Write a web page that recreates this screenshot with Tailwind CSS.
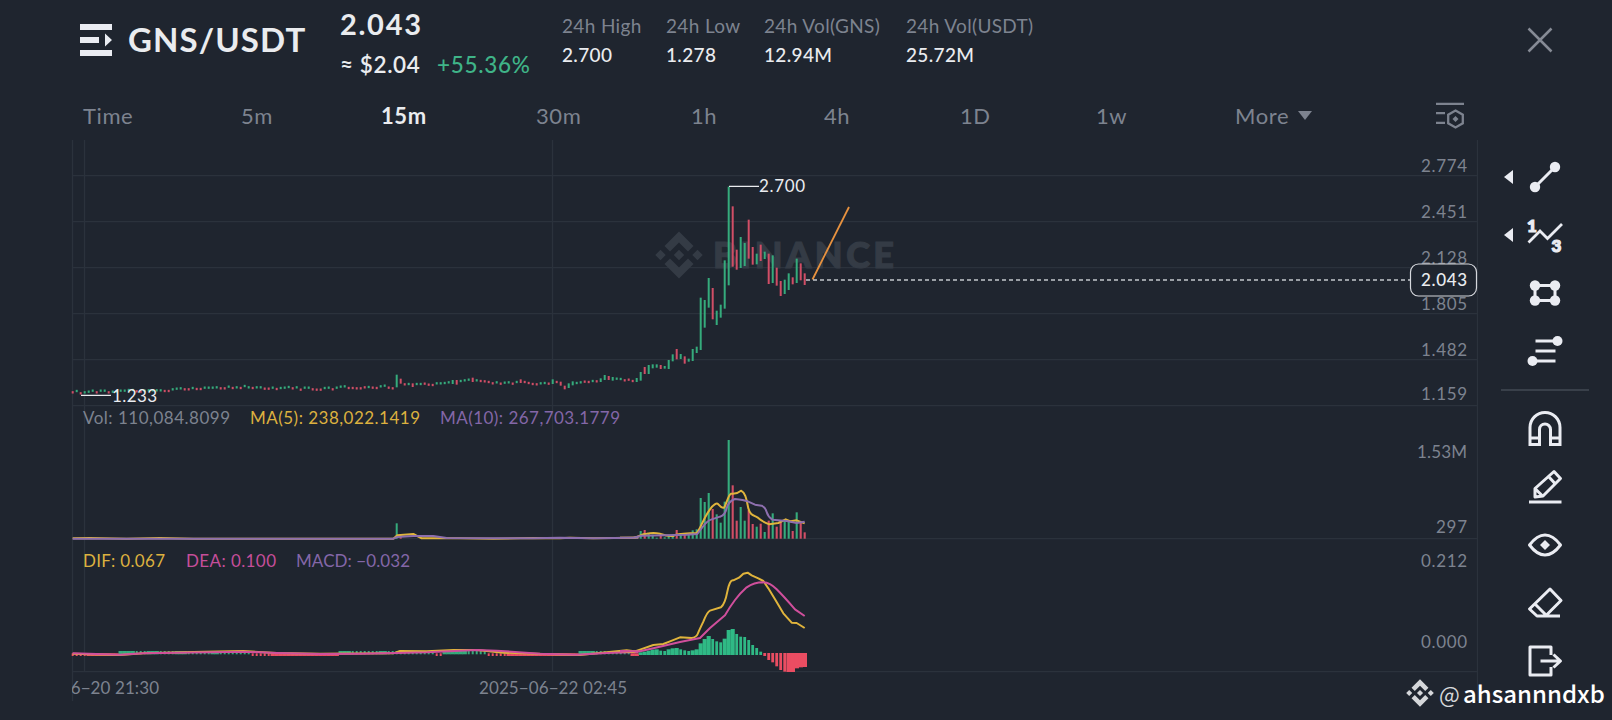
<!DOCTYPE html>
<html lang="en">
<head>
  <meta charset="UTF-8" />
  <meta name="viewport" content="width=device-width, initial-scale=1" />
  <title>GNS/USDT</title>
  <script src="https://cdn.jsdelivr.net/npm/@tailwindcss/browser@4"></script>
</head>
<body class="w-[1612px] h-[720px] overflow-hidden bg-[#1f252f] text-[#eaecef] font-[Lato,sans-serif] flex relative">

  <main class="w-[1478px] flex flex-col">
    <!-- Header -->
    <header class="h-[94px] pl-20 flex whitespace-nowrap">
      <svg class="w-8 h-8 mt-6" viewBox="0 0 32 32" fill="#eaecf2">
        <path d="M0 0h32v6H0zM0 13h19v6H0zM0 26h32v6H0zM25 9.500l7 6.500-7 6.500z" />
      </svg>
      <h1 class="ml-[16px] mt-[19px] w-[212px] text-[33px] leading-10 font-bold tracking-[1.1px]">GNS/USDT</h1>
      <div class="w-[222px]">
        <div class="mt-[8px] text-[29px] leading-8 font-bold tracking-[1.7px]">2.043</div>
        <div class="mt-[9px] flex text-[22.5px] leading-8">
          <span class="w-[97px] font-semibold tracking-[0.6px]">≈ $2.04</span>
          <span class="text-[#3fb488] font-medium tracking-[0.7px]">+55.36%</span>
        </div>
      </div>
      <dl class="flex pt-[12px] text-[19px] leading-7 tracking-[0.35px]">
        <div class="w-[104px]"><dt class="text-[#7d838f]">24h High</dt><dd class="mt-px font-medium">2.700</dd></div>
        <div class="w-[98px]"><dt class="text-[#7d838f]">24h Low</dt><dd class="mt-px font-medium">1.278</dd></div>
        <div class="w-[142px]"><dt class="text-[#7d838f]">24h Vol(GNS)</dt><dd class="mt-px font-medium">12.94M</dd></div>
        <div><dt class="text-[#7d838f]">24h Vol(USDT)</dt><dd class="mt-px font-medium">25.72M</dd></div>
      </dl>
    </header>

    <!-- Intervals -->
    <nav class="h-[46px] pl-[83px] flex items-start text-[22px] leading-[44px] tracking-[0.6px] text-[#7d838f] whitespace-nowrap">
      <span class="w-[158px]">Time</span>
      <span class="w-[140px]">5m</span>
      <span class="w-[155px] text-[#eaecef] font-bold">15m</span>
      <span class="w-[155px]">30m</span>
      <span class="w-[133px]">1h</span>
      <span class="w-[136px]">4h</span>
      <span class="w-[136px]">1D</span>
      <span class="w-[139px]">1w</span>
      <span class="w-[201px] flex items-center gap-[9px]">More
        <svg class="w-[14px] h-[9px] -mt-[2px]" viewBox="0 0 14 9" fill="#7d838f"><path d="M0 0h14L7 9z" /></svg>
      </span>
      <svg class="w-7 h-[27px] mt-[8px]" viewBox="0 0 28 27" fill="none" stroke="#7d838f" stroke-width="2.300">
        <path d="M0 1.800h28M0 11.200h9M0 20.800h9" />
        <path d="M19.500 8.500l7.300 4.200v8.600l-7.300 4.200-7.300-4.200v-8.600z" />
        <path d="M19.500 14l3 3-3 3-3-3z" fill="#7d838f" stroke="none" />
      </svg>
    </nav>

    <!-- Chart, the viewBox starts below the intervals -->
    <svg class="w-[1478px] h-[580px]" viewBox="0 140 1478 580" font-family="Lato, sans-serif" font-size="17">
      <g stroke="#2b323c" stroke-width="1.300">
        <path d="M72 175.700H1477M72 221.700H1477M72 267.700H1477M72 313.700H1477M72 359.700H1477M72 405.700H1477M72 538.700H1477M72 671.700H1477" />
        <path d="M72.500 140V701M84.500 140V672M552.500 140V672M1477.500 140V701" />
      </g>

      <!-- Watermark -->
      <g fill="#343b45">
        <g transform="translate(679 255)">
          <path d="M0-23.500L14.500-9l-5.500 5.500L0-12.500l-9 9L-14.500-9zM0 23.500L14.500 9 9 3.500l-9 9-9-9L-14.500 9zM0-5.200L5.200 0 0 5.200-5.200 0zM-18.500-5.200L-13.300 0l-5.200 5.200L-23.700 0zM18.500-5.200L23.700 0l-5.200 5.200L13.300 0z" />
        </g>
        <text x="713" y="268" font-size="36" font-weight="900" textLength="181" stroke="#343b45" stroke-width="1.200">BINANCE</text>
      </g>

      <g id="candles"></g>
      <g id="volume"></g>
      <g id="macd"></g>

      <!-- Indicator lines -->
      <g fill="none" stroke-width="6" stroke-linejoin="round">
        <g transform="translate(60 360) scale(0.33333)">
          <path stroke="#e0b43c" d="M38 535L90 534 200 536 300 534 400 536 1000 536 1012 526 1060 522 1085 535 1130 535 1200 535 1300 536 1420 534 1500 535 1530 533 1600 535 1660 534 1735 533" />
          <path stroke="#8d6fae" d="M38 536H1000L1012 531 1060 528 1120 528 1160 534 1300 535 1420 535 1500 533 1600 535 1735 533" />
          <path stroke="#e0b43c" d="M38 881L180 885 250 880 400 876 550 873 650 879 780 881 1000 880 1020 873 1100 874 1180 870 1250 870 1330 878 1450 882 1560 885 1640 877 1700 871 1735 875" />
          <path stroke="#d04f9c" d="M38 880L180 884 250 880 450 877 550 875 650 879 780 882 900 881 1010 879 1100 877 1250 870 1310 872 1440 881 1550 884 1640 879 1735 876" />
        </g>
        <g transform="translate(620 400) scale(0.33333)">
          <path stroke="#e0b43c" d="M0 413H40C60 412 60 402 80 401 100 397 115 400 120 401S135 410 160 408C170 400 200 401 230 399 240 390 250 355 270 328 280 314 290 308 294 312S305 328 313 322C320 310 325 285 333 281 345 283 353 280 363 272 375 278 378 290 385 325 390 345 400 346 412 352 425 364 440 370 448 373L475 369 497 358 512 364 530 361 554 370" />
          <path stroke="#8d6fae" d="M0 413H40L65 407 200 404 232 402 250 378Q262 362 275 358L300 350Q315 346 320 325T345 297Q370 299 385 305L405 314 425 317Q436 322 440 336T457 359L500 363 530 369 554 365" />
          <path stroke="#e0b43c" d="M0 753L40 756 60 749 100 735 130 732 150 724 180 712 215 714Q229 712 233 702T250 665Q262 635 270 632L303 622Q315 612 322 575T340 541L357 533 370 521 383 518 395 526 415 535 430 543 445 565 465 598 490 640 515 668 530 669 554 684" />
          <path stroke="#d04f9c" d="M0 753L60 754 100 745 180 726 240 714 270 684 315 646Q330 620 345 600T380 562Q402 547 430 547 450 548 470 568T525 628L554 648" />
        </g>
      </g>

      <!-- Drawn trend line -->
      <path d="M812.500 279.500L849 207" stroke="#e8923f" stroke-width="1.800" />

      <!-- High and low markers -->
      <path d="M729 186.300H759M81 395.300H111" stroke="#eaecef" stroke-width="1.300" />
      <g fill="#eaecef">
        <text x="759" y="192" textLength="46">2.700</text>
        <text x="112" y="402" textLength="45">1.233</text>
      </g>

      <!-- Price scale -->
      <g fill="#7d838f">
        <text x="1421" y="172" textLength="46">2.774</text>
        <text x="1421" y="218" textLength="46">2.451</text>
        <text x="1421" y="264" textLength="46">2.128</text>
        <text x="1421" y="310" textLength="46">1.805</text>
        <text x="1421" y="356" textLength="46">1.482</text>
        <text x="1421" y="400" textLength="46">1.159</text>
        <text x="1417" y="458" textLength="50">1.53M</text>
        <text x="1436" y="533" textLength="31">297</text>
        <text x="1421" y="567" textLength="46">0.212</text>
        <text x="1421" y="648" textLength="46">0.000</text>
      </g>

      <!-- Last price -->
      <path d="M806 280H1411" stroke="#c3c7cd" stroke-width="1.300" stroke-dasharray="4 3" />
      <rect x="1410.500" y="264" width="66" height="32" rx="8" fill="#1f252f" stroke="#d5d7dc" stroke-width="1.200" />
      <text x="1421" y="286" fill="#eaecef" font-weight="500" textLength="46">2.043</text>

      <!-- Indicator values -->
      <text x="83" y="424" fill="#7d838f" textLength="147">Vol: 110,084.8099</text>
      <text x="250" y="424" fill="#dcb13f" textLength="170">MA(5): 238,022.1419</text>
      <text x="440" y="424" fill="#8467a8" textLength="180">MA(10): 267,703.1779</text>
      <text x="83" y="567" fill="#dcb13f" textLength="82">DIF: 0.067</text>
      <text x="186" y="567" fill="#c54e9a" textLength="90">DEA: 0.100</text>
      <text x="296" y="567" fill="#8467a8" textLength="114">MACD: −0.032</text>

      <!-- Time scale -->
      <svg x="72" y="675" width="1406" height="40">
        <g fill="#7d838f">
          <text x="-61" y="19" textLength="148">2025−06−20 21:30</text>
          <text x="407" y="19" textLength="148">2025−06−22 02:45</text>
        </g>
      </svg>
    </svg>
  </main>

  <!-- Drawing tools -->
  <aside class="w-[134px] flex flex-col">
    <div class="h-[148px] pt-[27px] pl-[49px]">
      <svg class="w-[26px] h-[26px]" viewBox="0 0 26 26" fill="none" stroke="#868b95" stroke-width="2.500"><path d="M1.500 1.500l23 23M24.500 1.500l-23 23" /></svg>
    </div>
    <div class="h-[58px] pl-[26px] flex items-center gap-[12px]">
      <svg class="w-[9px] h-[14px]" viewBox="0 0 9 14" fill="#eaecf2"><path d="M9 0v14L0 7z" /></svg>
      <svg class="w-10 h-10" viewBox="0 0 40 40" fill="#eaecf2"><path d="M10 30L30 10" stroke="#eaecf2" stroke-width="3" /><circle cx="10" cy="30" r="5.200" /><circle cx="30" cy="10" r="5.200" /></svg>
    </div>
    <div class="h-[58px] pl-[26px] flex items-center gap-[12px]">
      <svg class="w-[9px] h-[14px]" viewBox="0 0 9 14" fill="#eaecf2"><path d="M9 0v14L0 7z" /></svg>
      <svg class="w-10 h-10 overflow-visible" viewBox="0 0 40 40" fill="#eaecf2" font-family="Lato, sans-serif" font-weight="900" font-size="17">
        <path d="M3.500 27.500L15 16l7.500 7.500L37 9" fill="none" stroke="#eaecf2" stroke-width="2.800" />
        <g stroke="#eaecf2" stroke-width="1.200"><text x="2" y="16.500">1</text><text x="26.500" y="36.500">3</text></g>
      </svg>
    </div>
    <div class="h-[58px] pl-[47px] flex items-center">
      <svg class="w-10 h-10" viewBox="0 0 40 40" fill="#eaecf2">
        <path d="M10 12.500h20v15H10z" fill="none" stroke="#eaecf2" stroke-width="3" />
        <circle cx="10" cy="12.500" r="5.200" /><circle cx="30" cy="12.500" r="5.200" /><circle cx="10" cy="27.500" r="5.200" /><circle cx="30" cy="27.500" r="5.200" />
      </svg>
    </div>
    <div class="h-[58px] pl-[47px] flex items-center">
      <svg class="w-10 h-10" viewBox="0 0 40 40" fill="#eaecf2">
        <path d="M10.500 10H32M10.500 20h20M8 30h22.500" stroke="#eaecf2" stroke-width="3" />
        <circle cx="32.500" cy="10" r="5" /><circle cx="7.500" cy="30" r="5" />
      </svg>
    </div>
    <div class="h-5 pl-[23px] flex items-center"><div class="w-[88px] h-[2px] bg-[#39404a]"></div></div>
    <div class="h-[58px] pl-[47px] flex items-center">
      <svg class="w-10 h-10" viewBox="0 0 40 40" fill="none" stroke="#eaecf2" stroke-width="3">
        <path d="M5 35.500V18.500a15 15 0 0 1 30 0V35.500H25.500V20.500a5.500 5.500 0 0 0-11 0V35.500zM5 29h9.500M25.500 29h9.500" />
      </svg>
    </div>
    <div class="h-[58px] pl-[47px] flex items-center">
      <svg class="w-10 h-10" viewBox="0 0 40 40" fill="none" stroke="#eaecf2" stroke-width="3" stroke-linejoin="round">
        <path d="M10 30v-8.500L29 4.500l6.500 7L18 29zM23.500 9.500l6.500 7M10.500 22l7 7M4 35h32.500" />
      </svg>
    </div>
    <div class="h-[58px] pl-[47px] flex items-center">
      <svg class="w-10 h-10" viewBox="0 0 40 40" fill="none" stroke="#eaecf2" stroke-width="3" stroke-linejoin="round">
        <path d="M4.500 20Q12 10 20 10t15.500 10Q28 30 20 30T4.500 20z" />
        <path d="M20 15l5 5-5 5-5-5z" fill="#eaecf2" stroke="none" />
      </svg>
    </div>
    <div class="h-[58px] pl-[47px] flex items-center">
      <svg class="w-10 h-10" viewBox="0 0 40 40" fill="none" stroke="#eaecf2" stroke-width="3" stroke-linejoin="round">
        <path d="M25 6l11 11.500L20.500 33H12L4.500 26zM10 21l12 12M12 33h23" />
      </svg>
    </div>
    <div class="h-[58px] pl-[47px] flex items-center">
      <svg class="w-10 h-10" viewBox="0 0 40 40" fill="none" stroke="#eaecf2" stroke-width="3" stroke-linejoin="round">
        <path d="M26 14V6H5v28h21v-8M15.500 20H35M28.500 13.500L35.500 20l-7 6.500" />
      </svg>
    </div>
  </aside>

  <!-- Author tag over the chart corner -->
  <div class="absolute left-[1406px] top-[675px] flex items-center h-9 font-['Noto_Sans_CJK_SC',sans-serif] text-[24px] whitespace-nowrap">
    <svg class="w-7 h-7" viewBox="-24 -24 48 48" fill="#d5d7da">
      <path d="M0-23.500L14.500-9l-5.500 5.500L0-12.500l-9 9L-14.500-9zM0 23.500L14.500 9 9 3.500l-9 9-9-9L-14.500 9zM0-5.200L5.200 0 0 5.200-5.200 0zM-18.500-5.200L-13.300 0l-5.200 5.200L-23.700 0zM18.500-5.200L23.700 0l-5.200 5.200L13.300 0z" />
    </svg>
    <span class="ml-[5px] w-[24px] text-[22px] text-[#d5d7da]">@</span>
    <span class="text-white font-medium">ahsannndxb</span>
  </div>

  <script>
    const GREEN = '#35ab7c';
    const RED = '#d14e66';
    const X0 = 72.7;
    const STEP = 4;

    // Colour, then centre or top-bottom, in thirds of a pixel below y = 360
    const flat = 'r97 g93 r100 g97 g95 g92 r97 g92 g92 r97 g95 g95 g92 g92 g90 g90 r94 r95 g92 g91 g91 g91 g91 r93 r93 g88 g86 g85 r88 r88 g84 r87 r87 g83 g83 g83 g82 r85 r85 g80 r84 g82 r84 g78 g82 r84 g82 g82 r86 r86 g83 r87 g84 g83 g81 r85 g82 r89 g83 g83 r88 r89 r89 g84 g83 r88 g83 g80 g79 r84 r84 r85 r85 r82 g81 r83 r84 g79 g77 r83 r85 g44-82 r56-71 r73 g72 r70-81 g72 g72 r71 r74 r75 g70 g70 g69 g67 g60-72 r60-74 g63 g61 g59 r53-66 g61 r63 r64 r66 r70 g67 r71 g68 g67 r71 g66 r58-69 r66 r69 r72 r73 g70 g69 r71 g58-72 r66 r65-77 r77-88 g70-84 g64-76 g69 g67 r65 r66 g63 r64 g55-66 g45-60 r48-60 g51-62 g56 g57 r61 r59 r63 g54-66';
    // Same, below y = 150
    const rally = 'g666-692 r651-672 g645-672 g643-655 g643-653 r645-657 g648-656 g630-657 g613-634 r597-628 g612-627 r619-641 g626-635 g597-633 g590-609 g443-600 g450-533 g384-473 r414-508 g482-525 g464-503 g331-476 g110-406 r169-350 r299-359 g261-354 g279-348 r209-326 r291-344 g311-343 r284-333 g305-327 r311-402 g316-399 r353-407 r393-438 g389-432 g370-420 r382-403 g326-399 r340-391 r370-405';
    const volumes = [393, 390, 402, 404, 413, 404, 412, 405, 403, 390, 400, 402, 402, 391, 388, 294, 306, 279, 327, 343, 368, 305, 120, 256, 362, 321, 362, 330, 372, 380, 371, 396, 362, 340, 380, 360, 362, 364, 393, 337, 366, 397];
    const hist = [757, 755, 752, 749, 748, 752, 753, 748, 745, 744, 748, 751, 753, 751, 748, 730, 717, 708, 717, 724, 727, 716, 690, 687, 702, 710, 711, 720, 735, 744, 755, -768, -780, -787, -799, -810, -815, -816, -816, -805, -802, -801];
    // [from, to, colour, solid]
    const runs = [[0, 3, RED, 0], [4, 11, RED, 1], [12, 15, GREEN, 1], [16, 18, GREEN, 0], [19, 21, GREEN, 1], [22, 25, GREEN, 0], [26, 28, GREEN, 1], [29, 34, GREEN, 0], [35, 36, GREEN, 1], [37, 44, GREEN, 0], [45, 49, RED, 0], [50, 66, RED, 1], [67, 69, GREEN, 1], [70, 76, GREEN, 0], [77, 78, GREEN, 1], [79, 90, GREEN, 0], [91, 92, RED, 0], [93, 98, GREEN, 1], [99, 103, GREEN, 0], [104, 108, RED, 0], [109, 126, RED, 1], [127, 130, GREEN, 1], [131, 139, GREEN, 0], [140, 141, RED, 1]];

    function bar(parent, i, top, bottom, width, color) {
      const r = document.createElementNS('http://www.w3.org/2000/svg', 'rect');
      r.setAttribute('x', X0 + i * STEP - width / 2);
      r.setAttribute('y', top);
      r.setAttribute('width', width);
      r.setAttribute('height', bottom - top);
      r.setAttribute('fill', color);
      parent.appendChild(r);
    }

    const candles = document.getElementById('candles');
    const volume = document.getElementById('volume');
    const macd = document.getElementById('macd');

    function drawCandles(list, base, first) {
      list.split(' ').forEach((c, i) => {
        let [top, bottom] = c.slice(1).split('-').map(Number);
        if (!bottom) { bottom = top + 3.5; top -= 3.5; }
        bar(candles, first + i, base + top / 3, base + bottom / 3, 2, c[0] === 'g' ? GREEN : RED);
      });
    }
    const start = flat.split(' ').length;
    drawCandles(flat, 360, 0);
    drawCandles(rally, 150, start);

    bar(volume, 81, 523.3, 538.7, 2, GREEN);
    bar(volume, 82, 536, 538.7, 2, RED);
    rally.split(' ').forEach((c, i) => {
      bar(volume, start + i, 400 + volumes[i] / 3, 538.7, 2.1, c[0] === 'g' ? GREEN : RED);
    });

    runs.forEach(([from, to, color, solid]) => {
      for (let i = from; i <= to; i++) {
        if (color === RED) bar(macd, i, 653.3, 656, solid ? 4.4 : 2, '#ea4d62');
        else bar(macd, i, 651, 654.3, solid ? 4.4 : 2, GREEN);
      }
    });
    hist.forEach((h, i) => {
      const solid = i < 5 || (i > 6 && i < 10) || (i > 12 && i < 18) || (i > 20 && i < 24) || i > 36;
      if (h < 0) bar(macd, start + i, 653, 400 - h / 3, solid ? 4.6 : 2.8, '#ea4d62');
      else bar(macd, start + i, 400 + h / 3, 655, solid ? 4.1 : 2.8, '#2fb985');
    });
  </script>
</body>
</html>
